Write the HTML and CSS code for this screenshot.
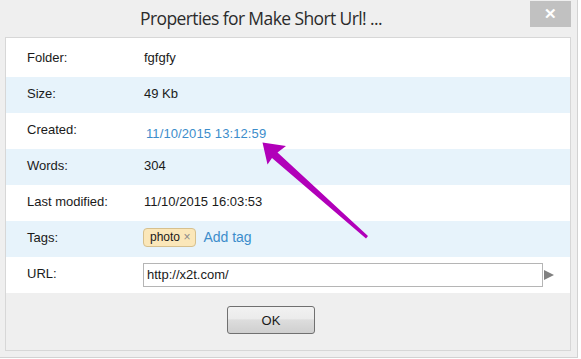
FILE: index.html
```html
<!DOCTYPE html>
<html lang="en">
<head>
    <meta charset="UTF-8">
    <title>Properties</title>
    <link rel="stylesheet" href="styles.css">
</head>
<body>
<div class="window">
    <div class="titlebar">
        <span class="title">Properties for Make Short Url! ...</span>
        <span class="close">&#x2715;</span>
    </div>

    <div class="panel">
        <div class="rows">
            <div class="row">
                <span class="label">Folder:</span>
                <span class="value">fgfgfy</span>
            </div>
            <div class="row alt">
                <span class="label">Size:</span>
                <span class="value">49 Kb</span>
            </div>
            <div class="row">
                <span class="label">Created:</span>
                <span class="value created">11/10/2015 13:12:59</span>
            </div>
            <div class="row alt">
                <span class="label">Words:</span>
                <span class="value">304</span>
            </div>
            <div class="row">
                <span class="label">Last modified:</span>
                <span class="value">11/10/2015 16:03:53</span>
            </div>
            <div class="row alt">
                <span class="label">Tags:</span>
                <span class="value tags">
                    <span class="tag">photo <span class="tag-x">&times;</span></span>
                    <a class="add-tag" href="#">Add tag</a>
                </span>
            </div>
            <div class="row">
                <span class="label">URL:</span>
                <span class="value url">
                    <input class="url-input" type="text" value="http://x2t.com/">
                    <span class="go"></span>
                </span>
            </div>
        </div>

        <div class="footer">
            <button class="ok" type="button">OK</button>
        </div>
    </div>

    <!-- annotation arrow drawn over the dialog -->
    <svg class="arrow" width="581" height="359" viewBox="0 0 581 359">
        <polygon fill="#b100b9" points="262.5,142.5 286,146 277.5,152.5 368,236 366,238.5 272,158 267.5,164.5"/>
    </svg>
</div>
</body>
</html>
```

FILE: styles.css
```css
body {
    margin: 0;
    background-color: #ffffff;
    font-family: "Liberation Sans", Arial, sans-serif;
    color: #1a1a1a;
}

.window {
    position: relative;
    width: 577px;
    height: 357px;
    background-color: #efefef;
    border-right: 1px solid #d2d2d2;
    border-bottom: 1px solid #d2d2d2;
}

.titlebar {
    display: flex;
    align-items: flex-start;
    height: 37px;
}

.title {
    flex: 1;
    padding: 6px 0 0 140px;
    font-family: "Open Sans", "Noto Sans", sans-serif;
    font-size: 17.5px;
    letter-spacing: -0.6px;
    color: #2b2b2b;
}

.close {
    width: 41px;
    height: 26px;
    margin: 1px 6px 0 0;
    background-color: #c1c1c1;
    color: #ffffff;
    font-size: 15px;
    font-weight: bold;
    text-align: center;
    line-height: 26px;
}

.panel {
    margin: 0 6px 0 5px;
    height: 312px;
    border: 1px solid #d7d7d7;
}

.rows {
    background-color: #ffffff;
    padding-top: 3px;
}

.row {
    box-sizing: border-box;
    display: grid;
    grid-template-columns: 117px 1fr;
    align-items: center;
    height: 36px;
    padding: 0 0 4px 21px;
    font-size: 13px;
}

.row.alt {
    background-color: #e7f3fb;
}

.label {
    color: #1a1a1a;
}

.created {
    color: #3c8dcb;
    font-size: 13px;
    letter-spacing: 0.1px;
    padding: 8px 0 0 2px;
}

.tags {
    display: flex;
    align-items: center;
    margin-left: -1px;
}

.tag {
    background-color: #fbe7b9;
    border: 1px solid #d6c08e;
    border-radius: 4px;
    padding: 1px 5px 2px 6px;
    font-size: 12px;
    color: #1a1a1a;
}

.tag-x {
    color: #8a8a8a;
    font-size: 12px;
}

.add-tag {
    margin-left: 7px;
    color: #3c8dcb;
    text-decoration: none;
    font-size: 14px;
}

.url {
    display: flex;
    align-items: center;
    margin: 3px 0 0 -1px;
}

.url-input {
    box-sizing: border-box;
    width: 400px;
    height: 24px;
    margin: 0;
    padding: 0 3px;
    border: 1px solid #b5b5b5;
    font-family: "Liberation Sans", Arial, sans-serif;
    font-size: 13px;
    color: #1a1a1a;
    outline: none;
}

.go {
    width: 0;
    height: 0;
    margin-left: 1px;
    border-top: 5px solid transparent;
    border-bottom: 5px solid transparent;
    border-left: 10px solid #808080;
}

.footer {
    display: flex;
    justify-content: center;
    padding-top: 13px;
    padding-right: 34px;
}

.ok {
    width: 88px;
    height: 28px;
    border: 1px solid #707070;
    border-radius: 3px;
    background: linear-gradient(#f2f2f2 0%, #ebebeb 45%, #dddddd 50%, #cfcfcf 100%);
    font-family: "Liberation Sans", Arial, sans-serif;
    font-size: 13px;
    color: #1a1a1a;
}

.arrow {
    position: absolute;
    left: 0;
    top: 0;
    pointer-events: none;
}
```
